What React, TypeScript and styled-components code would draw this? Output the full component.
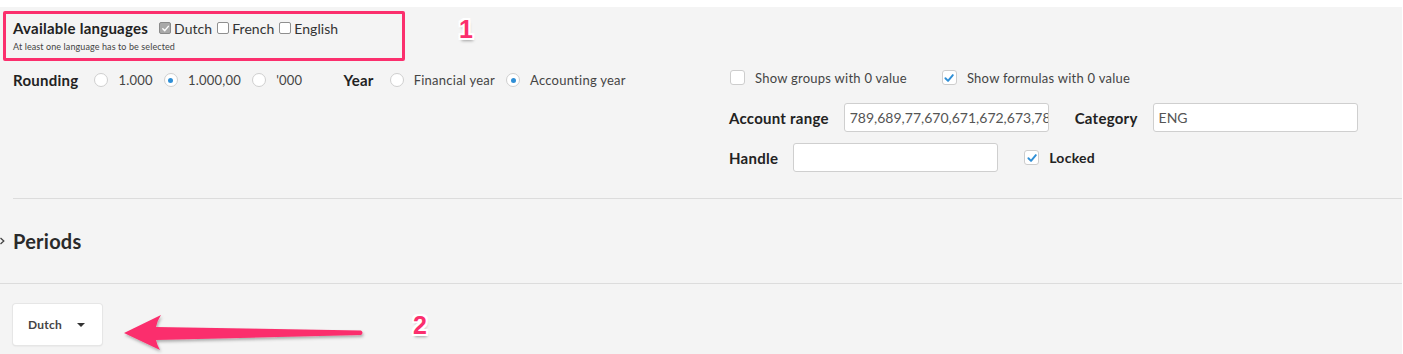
import styled, { createGlobalStyle } from "styled-components";

const GlobalStyle = createGlobalStyle`
  html, body {
    margin: 0;
    padding: 0;
    background: #fff;
  }
  body {
    font-family: Lato, "Open Sans", sans-serif;
    color: #333;
    letter-spacing: 0.25px;
  }
`;

const pink = "#fb2f6d";
const blue = "#2f8fd6";

const Page = styled.div`
  padding-top: 7px;
  height: 347px;
  overflow: hidden;
`;

const Panel = styled.section`
  position: relative;
  background: #f4f4f4;
  margin-right: 1px;
  height: 347px;
  padding-left: 13px;
`;

const LangBlock = styled.div`
  padding-top: 13px;
  height: 49px;
`;

const LangRow = styled.div`
  display: flex;
  align-items: center;
  height: 16px;
`;

const BlockTitle = styled.span`
  font-size: 15px;
  font-weight: 700;
  color: #222;
  margin-right: 11px;
`;

const LangOption = styled.label`
  display: flex;
  align-items: center;
  font-size: 14px;
  letter-spacing: 0.05px;
  color: #333;
  margin-right: 5px;
`;

const TinyBox = styled.span<{ $checked?: boolean }>`
  width: 10px;
  height: 10px;
  margin-right: 3px;
  border-radius: 2px;
  border: 1px solid ${(p) => (p.$checked ? "#8a8a8a" : "#8f8f8f")};
  background: ${(p) => (p.$checked ? "#a9a9a9" : "#fff")};
  display: flex;
  align-items: center;
  justify-content: center;
`;

const Hint = styled.div`
  font-size: 9px;
  letter-spacing: 0.1px;
  color: #444;
  margin-top: 5px;
`;

const OptionsRow = styled.div`
  display: flex;
  height: 129px;
  border-bottom: 1px solid #dcdcdc;
`;

const LeftOptions = styled.div`
  width: 716px;
  display: flex;
  align-items: center;
  height: 22px;
`;

const Label = styled.span<{ $gap?: number }>`
  font-size: 15px;
  font-weight: 700;
  color: #222;
  margin-right: ${(p) => p.$gap ?? 16}px;
`;

const RadioOption = styled.label<{ $gap?: number }>`
  display: flex;
  align-items: center;
  font-size: 13px;
  color: #444;
  margin-right: ${(p) => p.$gap ?? 11}px;
`;

const Radio = styled.span<{ $on?: boolean }>`
  width: 12px;
  height: 12px;
  border-radius: 50%;
  border: 1px solid #cfcfcf;
  background: #fff;
  margin-right: 10px;
  display: flex;
  align-items: center;
  justify-content: center;
  &::after {
    content: "";
    width: 5px;
    height: 5px;
    border-radius: 50%;
    background: ${blue};
    display: ${(p) => (p.$on ? "block" : "none")};
  }
`;

const RightOptions = styled.div`
  display: flex;
  flex-direction: column;
`;

const CheckRow = styled.div`
  display: flex;
  align-items: center;
  height: 17px;
  margin-bottom: 17px;
  margin-left: 1px;
`;

const CheckOption = styled.label<{ $gap?: number; $bold?: boolean }>`
  display: flex;
  align-items: center;
  font-size: ${(p) => (p.$bold ? 14 : 13)}px;
  font-weight: ${(p) => (p.$bold ? 700 : 400)};
  color: ${(p) => (p.$bold ? "#222" : "#444")};
  margin-right: ${(p) => p.$gap ?? 0}px;
`;

const Box = styled.span`
  width: 13px;
  height: 13px;
  border: 1px solid #cdcdcd;
  border-radius: 3px;
  background: #fff;
  margin-right: 10px;
  display: flex;
  align-items: center;
  justify-content: center;
`;

const FieldRow = styled.div`
  display: flex;
  align-items: center;
  height: 29px;
  margin-bottom: 11px;
`;

const FieldLabel = styled.span`
  font-size: 15px;
  font-weight: 700;
  color: #222;
  margin-right: 15px;
`;

const TextInput = styled.div`
  box-sizing: border-box;
  width: 205px;
  height: 29px;
  border: 1px solid #cfcfcf;
  border-radius: 3px;
  background: #fff;
  padding: 0 5px;
  margin-right: 26px;
  font-size: 14px;
  letter-spacing: 0;
  color: #555;
  display: flex;
  align-items: center;
  overflow: hidden;
  white-space: nowrap;
`;

const PeriodsHeader = styled.div`
  display: flex;
  align-items: center;
  margin-left: -13px;
  height: 84px;
  border-bottom: 1px solid #dcdcdc;
`;

const PeriodsTitle = styled.h2`
  margin: 0 0 0 8px;
  font-size: 20px;
  font-weight: 700;
  color: #2a2a2a;
`;

const Footer = styled.div`
  padding-top: 20px;
`;

const DropButton = styled.button`
  box-sizing: border-box;
  width: 89px;
  height: 41px;
  background: #fff;
  border: none;
  border-radius: 3px;
  box-shadow: 0 0 0 1px #e6e6e6, 0 1px 2px rgba(0, 0, 0, 0.12);
  display: flex;
  align-items: center;
  padding: 0 0 0 15px;
  font-family: Lato, sans-serif;
  font-size: 12px;
  font-weight: 700;
  letter-spacing: 0.25px;
  color: #444;
  gap: 15px;
`;

const Caret = styled.span`
  width: 0;
  height: 0;
  border-left: 4px solid transparent;
  border-right: 4px solid transparent;
  border-top: 4px solid #333;
`;

const MarkBox = styled.div`
  position: absolute;
  left: 3px;
  top: 4px;
  width: 396px;
  height: 44px;
  border: 3px solid ${pink};
  border-radius: 2px;
  pointer-events: none;
`;

const Badge = styled.span<{ $x: number; $y: number }>`
  position: absolute;
  left: ${(p) => p.$x}px;
  top: ${(p) => p.$y}px;
  font-family: "Liberation Sans", Arial, sans-serif;
  font-weight: 700;
  font-size: 25px;
  line-height: 1;
  letter-spacing: 0;
  color: ${pink};
  text-shadow: -2px 0 #fff, 2px 0 #fff, 0 -2px #fff, 0 2px #fff, -2px -2px #fff,
    2px 2px #fff, -2px 2px #fff, 2px -2px #fff, 1px 3px 3px rgba(0, 0, 0, 0.35);
`;

const ArrowLayer = styled.svg`
  position: absolute;
  left: 0;
  top: 0;
  pointer-events: none;
`;

const Tick = ({ color, size }: { color: string; size: number }) => (
  <svg width={size} height={size} viewBox="0 0 10 10">
    <path d="M2 5.2 L4.2 7.4 L8.2 2.6" fill="none" stroke={color} strokeWidth="1.6" strokeLinecap="round" strokeLinejoin="round" />
  </svg>
);

export default function App() {
  return (
    <Page>
      <GlobalStyle />
      <Panel>
        <LangBlock>
          <LangRow>
            <BlockTitle>Available languages</BlockTitle>
            <LangOption>
              <TinyBox $checked>
                <Tick color="#fff" size={9} />
              </TinyBox>
              Dutch
            </LangOption>
            <LangOption>
              <TinyBox />
              French
            </LangOption>
            <LangOption>
              <TinyBox />
              English
            </LangOption>
          </LangRow>
          <Hint>At least one language has to be selected</Hint>
        </LangBlock>

        <OptionsRow>
          <LeftOptions>
            <Label>Rounding</Label>
            <RadioOption>
              <Radio />
              1.000
            </RadioOption>
            <RadioOption>
              <Radio $on />
              1.000,00
            </RadioOption>
            <RadioOption $gap={41}>
              <Radio />
              '000
            </RadioOption>
            <Label>Year</Label>
            <RadioOption>
              <Radio />
              Financial year
            </RadioOption>
            <RadioOption>
              <Radio $on />
              Accounting year
            </RadioOption>
          </LeftOptions>

          <RightOptions>
            <CheckRow>
              <CheckOption $gap={35}>
                <Box />
                Show groups with 0 value
              </CheckOption>
              <CheckOption>
                <Box>
                  <Tick color={blue} size={12} />
                </Box>
                Show formulas with 0 value
              </CheckOption>
            </CheckRow>
            <FieldRow>
              <FieldLabel>Account range</FieldLabel>
              <TextInput>789,689,77,670,671,672,673,789,690</TextInput>
              <FieldLabel>Category</FieldLabel>
              <TextInput>ENG</TextInput>
            </FieldRow>
            <FieldRow>
              <FieldLabel>Handle</FieldLabel>
              <TextInput />
              <CheckOption $bold>
                <Box>
                  <Tick color={blue} size={12} />
                </Box>
                Locked
              </CheckOption>
            </FieldRow>
          </RightOptions>
        </OptionsRow>

        <PeriodsHeader>
          <svg width="5" height="8" viewBox="0 0 5 8">
            <path d="M0.5 1 L3.8 4 L0.5 7" fill="none" stroke="#444" strokeWidth="1.3" />
          </svg>
          <PeriodsTitle>Periods</PeriodsTitle>
        </PeriodsHeader>

        <Footer>
          <DropButton>
            Dutch
            <Caret />
          </DropButton>
        </Footer>

        <MarkBox />
        <Badge $x={459} $y={10}>1</Badge>
        <Badge $x={413} $y={306}>2</Badge>
        <ArrowLayer width="400" height="347" viewBox="0 7 400 347">
          <defs>
            <filter id="arrowShadow" x="-10%" y="-30%" width="120%" height="160%">
              <feDropShadow dx="1" dy="2" stdDeviation="1.5" floodColor="#000" floodOpacity="0.3" />
            </filter>
          </defs>
          <path
            d="M124 333 L161 315 Q157 321 156 327 L361 330.5 Q364 332.5 361 335 L156 340 Q157 345 160 350 Z"
            fill={pink}
            filter="url(#arrowShadow)"
          />
        </ArrowLayer>
      </Panel>
    </Page>
  );
}
